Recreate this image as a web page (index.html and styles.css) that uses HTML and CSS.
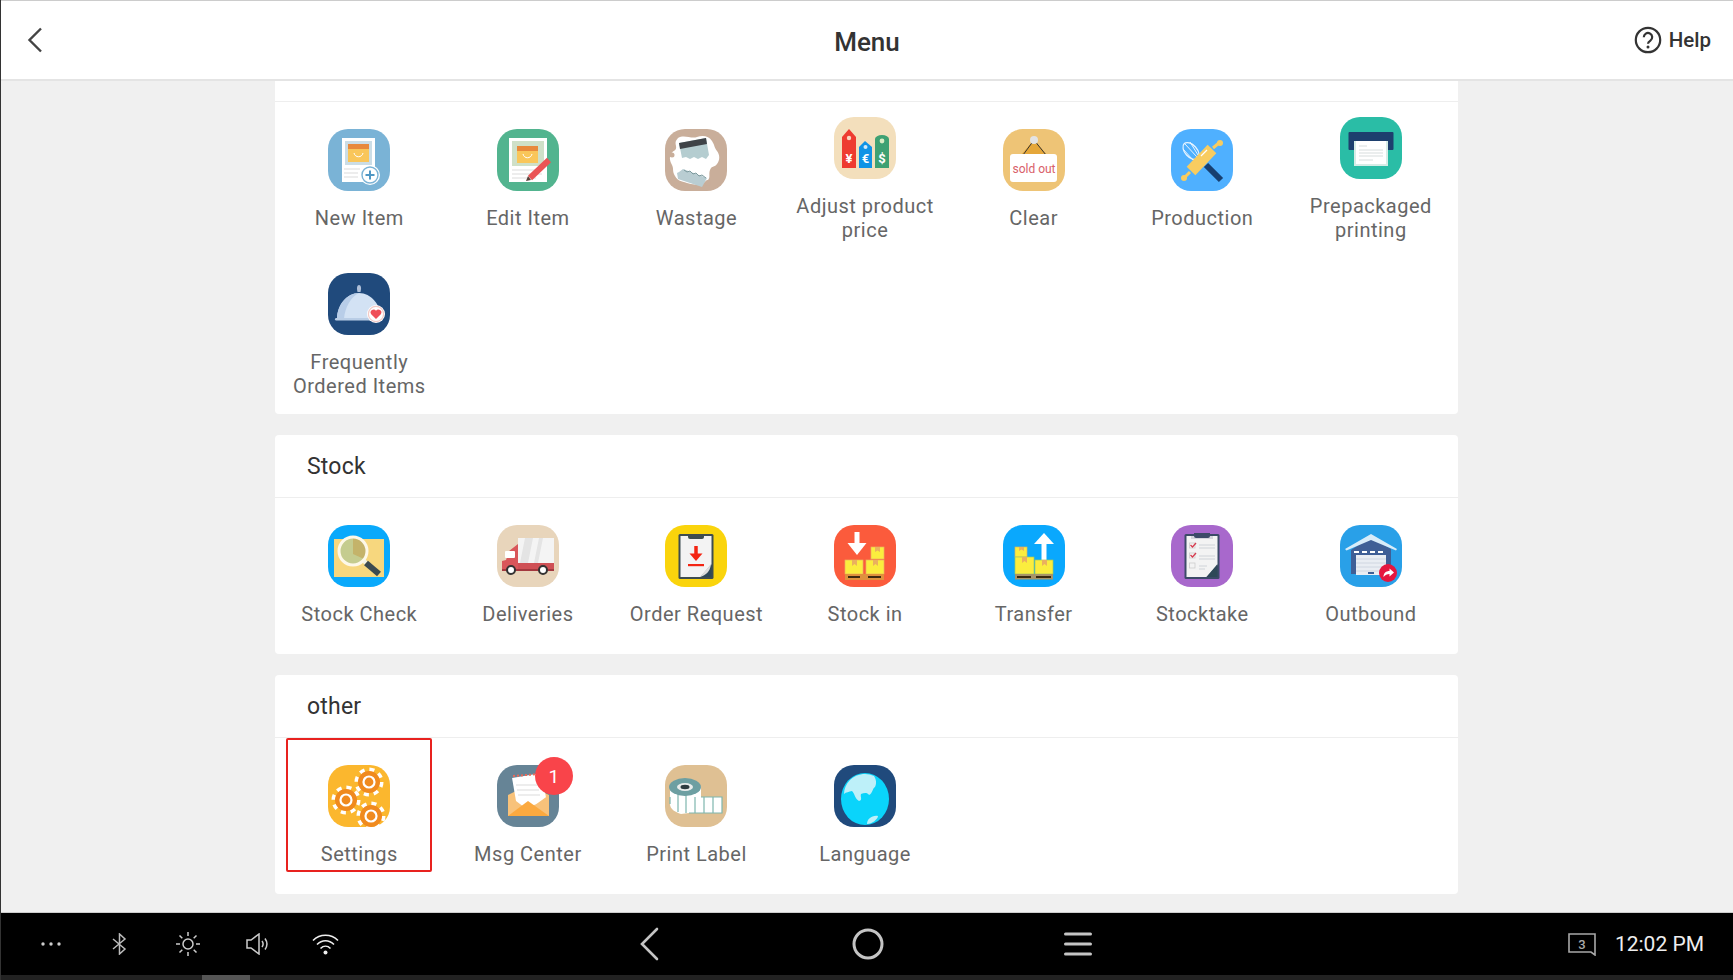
FILE: index.html
```html
<!DOCTYPE html>
<html lang="en">
<head>
<meta charset="utf-8">
<title>Menu</title>
<link rel="stylesheet" href="styles.css">
</head>
<body>
<div class="screen">
  <header class="topbar">
    <button class="back" aria-label="Back">
      <svg width="16" height="26" viewBox="0 0 16 26"><path d="M14 1.5 2.5 13 14 24.5" fill="none" stroke="#444" stroke-width="2.4"/></svg>
    </button>
    <h1 class="title">Menu</h1>
    <div class="help">
      <svg width="28" height="28" viewBox="0 0 28 28"><circle cx="14" cy="14" r="12.2" fill="none" stroke="#333" stroke-width="2.2"/><path d="M9.8 11.2a4.2 4.2 0 1 1 6.6 3.4c-1.5 1-2.4 1.6-2.4 3.2" fill="none" stroke="#333" stroke-width="2.2"/><circle cx="14" cy="21" r="1.5" fill="#333"/></svg>
      <span>Help</span>
    </div>
  </header>

  <main class="content">
    <div class="panel">
      <section class="card">
        <div class="card-head card-head-clipped"></div>
        <div class="grid">
          <div class="item">
            <svg class="icon" viewBox="0 0 62 62"><rect width="62" height="62" rx="20" fill="#7ab3d6"/><rect x="14" y="9" width="33" height="44" fill="#fff"/><rect x="17" y="12" width="27" height="24" fill="#cbdde6"/><rect x="20" y="15" width="21" height="18" fill="#f9c65a"/><path d="M20 15h21v5H20z" fill="#e8893c"/><path d="M26 24c1 5 8 5 9 0" fill="none" stroke="#fff" stroke-width="1"/><path d="M16 40h16M16 44h14M16 48h14" stroke="#dcdcdc" stroke-width="1.2"/><circle cx="42" cy="46" r="10" fill="#fff"/><circle cx="42" cy="46" r="8" fill="none" stroke="#7ab3d6" stroke-width="1.4"/><path d="M42 41.5v9M37.5 46h9" stroke="#4f97c4" stroke-width="2"/></svg>
            <span class="label">New Item</span>
          </div>
          <div class="item">
            <svg class="icon" viewBox="0 0 62 62"><rect width="62" height="62" rx="20" fill="#52b48f"/><rect x="12" y="9" width="38" height="44" fill="#fff"/><rect x="15" y="12" width="32" height="25" fill="#cfe0c8"/><rect x="20" y="17" width="21" height="17" fill="#f9c65a"/><path d="M20 17h21v5H20z" fill="#e8893c"/><path d="M26 25c1 5 8 5 9 0" fill="none" stroke="#fff" stroke-width="1"/><path d="M15 41h30M15 45h30M15 49h24" stroke="#dcdcdc" stroke-width="1.2"/><path d="M52 31 33 49" stroke="#ea5455" stroke-width="6"/><path d="M31 47l3 4-5 1z" fill="#59413a"/></svg>
            <span class="label">Edit Item</span>
          </div>
          <div class="item">
            <svg class="icon" viewBox="0 0 62 62"><rect width="62" height="62" rx="20" fill="#c9ae9a"/><path d="M13 9c6-4 13 1 19-1s12-1 15 4 2 6 5 10 3 9 0 13-5 1-7 6 2 9-5 12-12 3-18 1-9-2-12-7-1-7-3-11-3-7-1-11 6-3 5-8 0-5 2-8z" fill="#fff"/><circle cx="7" cy="26" r="2.500" fill="#c9ae9a"/><circle cx="43" cy="54" r="3" fill="#c9ae9a"/><path d="M14 14 41 9l3 17-3 4-4-2-4 2-4-2-4 2-4-2-4 1z" fill="#b5cdd0"/><path d="M14 14 41 9l1 6-27 5z" fill="#3f4347"/><path d="M18 40l24 9-5 9-24-8-1-6 2-1z" fill="#b9cdd2"/><path d="M19 41l3 2 3-1 3 3 3-1 3 3 3-1 4 3" fill="none" stroke="#7d9a9e" stroke-width="1"/></svg>
            <span class="label">Wastage</span>
          </div>
          <div class="item">
            <svg class="icon" viewBox="0 0 62 62"><rect width="62" height="62" rx="20" fill="#f3dfbc"/><path d="M8 20l7-8 7 8v31H8z" fill="#ee3b30"/><circle cx="15" cy="21" r="2.2" fill="#f9d5c0"/><text x="15" y="46" class="tag-text">¥</text><path d="M25 30l6-6 7 6v21H25z" fill="#0f93e6"/><circle cx="31.500" cy="30" r="2" fill="#cfe9fa"/><text x="31.500" y="46" class="tag-text">€</text><path d="M41 22a7 4 0 0 1 14 0v29H41z" fill="#3ea173"/><circle cx="48" cy="24" r="2.400" fill="#d9ecc4"/><text x="48" y="46" class="tag-text">$</text></svg>
            <span class="label">Adjust product price</span>
          </div>
          <div class="item">
            <svg class="icon" viewBox="0 0 62 62"><rect width="62" height="62" rx="20" fill="#eec476"/><path d="M31 11 17 27h28z" fill="#e5a73a"/><path d="M31 11 20 26M31 11 43 26" stroke="#333" stroke-width="1"/><circle cx="31" cy="11" r="4" fill="#e3e3e3"/><rect x="7" y="25" width="47" height="28" rx="3" fill="#fff"/><text x="31" y="44" class="sold-text">sold out</text></svg>
            <span class="label">Clear</span>
          </div>
          <div class="item">
            <svg class="icon" viewBox="0 0 62 62"><rect width="62" height="62" rx="20" fill="#4fb0ff"/><ellipse cx="20" cy="22" rx="6" ry="10" transform="rotate(-42 20 22)" fill="none" stroke="#e9f5ff" stroke-width="1.2"/><path d="M14 15l12 13M19 13l8 13M12 20l10 11" stroke="#e9f5ff" stroke-width="1"/><path d="M35 36l15 15" stroke="#173f70" stroke-width="6"/><path d="M20 42 41 20" stroke="#f8cc60" stroke-width="12"/><path d="M42 19l7-6M19 43l-6 6" stroke="#f8cc60" stroke-width="3"/><circle cx="49" cy="14" r="3" fill="#f8cc60"/><circle cx="13" cy="49" r="3" fill="#f8cc60"/><path d="M30 27l6-6" stroke="#fff" stroke-width="1.200"/></svg>
            <span class="label">Production</span>
          </div>
          <div class="item">
            <svg class="icon" viewBox="0 0 62 62"><rect width="62" height="62" rx="20" fill="#2abda6"/><rect x="8.500" y="15" width="45" height="18" rx="1" fill="#1d3f6e"/><rect x="14" y="24" width="34" height="25" fill="#d6ece6"/><rect x="16" y="24" width="30" height="23" fill="#fff"/><path d="M19 29h8M19 33h24M19 36h24M19 39h24M19 43h14" stroke="#d8dddd" stroke-width="1.200"/></svg>
            <span class="label">Prepackaged printing</span>
          </div>
          <div class="item">
            <svg class="icon" viewBox="0 0 62 62"><rect width="62" height="62" rx="20" fill="#204a7c"/><path d="M31 12c2 0 2.600 3 1.500 7h-3c-1-4-.5-7 1.500-7z" fill="#aebfd8"/><path d="M9 46c0-14 10-26 22-26s22 12 22 26z" fill="#d3e2f4"/><path d="M9 46c0-14 10-26 22-26-8 4-14 14-15 26z" fill="#b8cde8"/><rect x="7" y="45" width="45" height="2.500" rx="1.200" fill="#b9cde6"/><circle cx="48" cy="41" r="9" fill="#fff"/><circle cx="48" cy="41" r="7.600" fill="none" stroke="#f3c9c6" stroke-width="1.200"/><path d="M48 46l-4.800-4.800a2.900 2.900 0 0 1 4.800-3.400 2.900 2.900 0 0 1 4.800 3.400z" fill="#ef4f58"/></svg>
            <span class="label">Frequently Ordered Items</span>
          </div>
        </div>
      </section>

      <section class="card">
        <div class="card-head"><h2 class="card-title">Stock</h2></div>
        <div class="grid">
          <div class="item">
            <svg class="icon" viewBox="0 0 62 62"><rect width="62" height="62" rx="20" fill="#0aa9fb"/><rect x="6" y="14" width="50" height="38" fill="#f7d77e"/><circle cx="25" cy="26" r="14" fill="#c5cc8f"/><path d="M25 12a14 14 0 0 1 14 14c0 3-1 6-3 8l-11-5z" fill="#c4b36a"/><circle cx="25" cy="26" r="14" fill="none" stroke="#fdf8e8" stroke-width="3"/><path d="M36 36l2 2" stroke="#f3f3e6" stroke-width="4"/><path d="M38 38l13 11" stroke="#3c4a50" stroke-width="6"/></svg>
            <span class="label">Stock Check</span>
          </div>
          <div class="item">
            <svg class="icon" viewBox="0 0 62 62"><rect width="62" height="62" rx="20" fill="#e8d5bb"/><rect x="21" y="13" width="36" height="25" fill="#f4f4f4"/><path d="M28 13h8l-5 25h-8zM42 13h4l-5 25h-4z" fill="#e4e4e4"/><path d="M21 19v25H5v-8l4-1 3-9z" fill="#d9565a"/><rect x="8" y="26" width="10" height="7" rx="1" fill="#fff"/><rect x="21" y="38" width="36" height="6" fill="#cf5055"/><rect x="5" y="44" width="52" height="2" fill="#a3383e"/><circle cx="14" cy="45" r="4" fill="#fff" stroke="#333" stroke-width="2"/><circle cx="46" cy="45" r="4" fill="#fff" stroke="#333" stroke-width="2"/></svg>
            <span class="label">Deliveries</span>
          </div>
          <div class="item">
            <svg class="icon" viewBox="0 0 62 62"><rect width="62" height="62" rx="20" fill="#fad40c"/><rect x="13.500" y="9" width="35" height="45" rx="1.500" fill="#3d4c50"/><path d="M15.500 11h31v29l-11 12h-20z" fill="#f3f3f3"/><path d="M46.500 39v13h-11z" fill="#2f4858"/><path d="M35 52l11-13c-1 8-5 11-11 13z" fill="#ddd"/><path d="M23 10h16v2a2 2 0 0 1-2 2H25a2 2 0 0 1-2-2z" fill="#3d4c50"/><path d="M31 21v11" stroke="#f32412" stroke-width="3.500"/><path d="M24.500 28.500h13L31 36z" fill="#f32412"/><rect x="23" y="39" width="16" height="2.200" fill="#f32412"/></svg>
            <span class="label">Order Request</span>
          </div>
          <div class="item">
            <svg class="icon" viewBox="0 0 62 62"><rect width="62" height="62" rx="20" fill="#fb5b3c"/><path d="M23 7v13" stroke="#fff" stroke-width="5"/><path d="M13.500 18h19L23 30z" fill="#fff"/><rect x="37" y="22" width="13" height="12" fill="#fbed3e" stroke="#eab15e" stroke-width=".7"/><rect x="11" y="35" width="18" height="14" fill="#fbed3e" stroke="#eab15e" stroke-width=".7"/><rect x="32" y="35" width="18" height="14" fill="#fbed3e" stroke="#eab15e" stroke-width=".7"/><path d="M18 35h5v6l-2.500-2-2.500 2zM39 35h5v6l-2.500-2-2.500 2zM41 22h5v5l-2.500-1.500L41 27z" fill="#eab15e"/><rect x="11" y="49" width="39" height="6" fill="#e0913d"/><path d="M14 52h12M34 52h13" stroke="#3f2a10" stroke-width="1.800"/></svg>
            <span class="label">Stock in</span>
          </div>
          <div class="item">
            <svg class="icon" viewBox="0 0 62 62"><rect width="62" height="62" rx="20" fill="#0aa8fd"/><path d="M41 18v20" stroke="#fff" stroke-width="5"/><path d="M31 19l10-11 10 11z" fill="#fff"/><rect x="12" y="22" width="12" height="10" fill="#fbed3e" stroke="#d9b45e" stroke-width=".7"/><rect x="12" y="32" width="19" height="17" fill="#fbed3e" stroke="#9ec85e" stroke-width=".7"/><rect x="32" y="35" width="18" height="14" fill="#fbed3e" stroke="#9ec85e" stroke-width=".7"/><path d="M16 22h5v4l-2.500-1.500L16 26zM19 32h5v6l-2.500-2-2.500 2zM39 35h5v6l-2.500-2-2.500 2z" fill="#eab15e"/><rect x="12" y="49" width="38" height="5.500" fill="#a89468"/><path d="M14 52h14M33 52h15" stroke="#3a2a10" stroke-width="1.800"/></svg>
            <span class="label">Transfer</span>
          </div>
          <div class="item">
            <svg class="icon" viewBox="0 0 62 62"><rect width="62" height="62" rx="20" fill="#a868cc"/><rect x="13.500" y="9" width="35" height="45" rx="1.500" fill="#3c4a68"/><path d="M15.500 11h31v29l-11 12h-20z" fill="#f3f3f3"/><path d="M46.500 39v13h-11z" fill="#2f4858"/><path d="M20 11h22v3H20z" fill="#d5d5dc"/><path d="M23 8h16v3a2 2 0 0 1-2 2H25a2 2 0 0 1-2-2z" fill="#3c4a68"/><rect x="18.500" y="18" width="5.500" height="5" fill="none" stroke="#ccc" stroke-width=".8"/><path d="M19.500 20l2 2 3.500-4" fill="none" stroke="#d63c4f" stroke-width="1.300"/><rect x="18.500" y="28" width="5.500" height="5" fill="none" stroke="#ccc" stroke-width=".8"/><path d="M19.500 30l2 2 3.500-4" fill="none" stroke="#d63c4f" stroke-width="1.300"/><rect x="18.500" y="38" width="5.500" height="5" fill="none" stroke="#ccc" stroke-width=".8"/><path d="M28 20h16M28 23h16M28 31h16M28 34h16M28 41h8M28 44h6" stroke="#cfd3d8" stroke-width="1"/></svg>
            <span class="label">Stocktake</span>
          </div>
          <div class="item">
            <svg class="icon" viewBox="0 0 62 62"><rect width="62" height="62" rx="20" fill="#29a0e8"/><path d="M11 25 31 12l20 12v25H11z" fill="#3f5f96"/><path d="M5 24 31 9l26 15-1 1.500L31 15 6.500 25.500z" fill="#d8ecf9"/><path d="M14 27h5M22 27h5M30 27h5M38 27h5" stroke="#fff" stroke-width="2"/><rect x="16" y="30" width="30" height="20" fill="#e9edf3"/><path d="M16 34h30M16 38h30M16 42h30M16 46h30" stroke="#c8d0dc" stroke-width=".8"/><rect x="28" y="47" width="6" height="2" fill="#3f5f96"/><circle cx="48" cy="48" r="9" fill="#e5173f"/><path d="M43.500 52c0-4 2.500-6 6-6v-2.500l4.500 4-4.500 4V49c-2.500 0-4.500 1-6 3z" fill="#fff"/></svg>
            <span class="label">Outbound</span>
          </div>
        </div>
      </section>

      <section class="card">
        <div class="card-head"><h2 class="card-title">other</h2></div>
        <div class="grid">
          <div class="item item-selected">
            <svg class="icon" viewBox="0 0 62 62"><defs><g id="gear"><circle r="12.500" fill="none" stroke="#fff" stroke-width="4" stroke-dasharray="5 4.820"/><circle r="11" fill="#f08a1e"/><circle r="5.500" fill="#f08a1e" stroke="#fff" stroke-width="2.200"/></g></defs><rect width="62" height="62" rx="20" fill="#fbb72e"/><use href="#gear" x="41" y="17"/><use href="#gear" x="18" y="35"/><use href="#gear" x="43" y="51"/></svg>
            <span class="label">Settings</span>
          </div>
          <div class="item">
            <div class="icon-wrap">
              <svg class="icon" viewBox="0 0 62 62"><rect width="62" height="62" rx="20" fill="#668496"/><path d="M11 30 31 20l21 10v21H11z" fill="#f8c27a"/><path d="M16 12l30-3 3 30-30 3z" fill="#fff" transform="rotate(-4 31 26)"/><path d="M16 11l27-2" stroke="#e76a5a" stroke-width="2" stroke-dasharray="2 2"/><path d="M19 20h22M20 25h22M21 30h22" stroke="#dcdcdc" stroke-width="1.200"/><path d="M11 30l20 15 21-15v21H11z" fill="#f8c27a"/><path d="M11 51l20-15 21 15z" fill="#fba93f"/></svg>
              <span class="badge">1</span>
            </div>
            <span class="label">Msg Center</span>
          </div>
          <div class="item">
            <svg class="icon" viewBox="0 0 62 62"><rect width="62" height="62" rx="20" fill="#dfc093"/><path d="M5 21v18c0 5 5 8 11 10l8-1h33V32H36V21z" fill="#fff"/><path d="M13 24v23M21 28v20M30 32v16M39 32v16M48 32v16M5 32v7M36 32h21v16H24" fill="none" stroke="#7eb6ae" stroke-width="1.200"/><ellipse cx="20" cy="22" rx="16" ry="9" fill="#6d9fa2"/><ellipse cx="20" cy="22" rx="8" ry="4" fill="#e9edec"/><ellipse cx="20" cy="22" rx="4.500" ry="2.200" fill="#2d3b40"/></svg>
            <span class="label">Print Label</span>
          </div>
          <div class="item">
            <svg class="icon" viewBox="0 0 62 62"><rect width="62" height="62" rx="20" fill="#204a7c"/><ellipse cx="31" cy="34" rx="24" ry="26" fill="#0ad4fb"/><path d="M16 15c6-6 16-8 24-4 2 3 3 7 1 11-3 2-2 6-6 8-2-3-5-2-8-1-1 3 2 6-2 7-4-2-4-7-7-10-3 1-6 1-8 3 0-5 2-10 6-14z" fill="#bdf0f9"/><path d="M33 59c0-5 5-9 11-8 0 3-6 8-11 8z" fill="#bdf0f9"/></svg>
            <span class="label">Language</span>
          </div>
        </div>
      </section>
    </div>
  </main>

  <footer class="sysbar">
    <div class="sys-main">
      <div class="sys-left">
        <span class="slot"><svg width="22" height="6" viewBox="0 0 22 6"><g fill="#ccc"><circle cx="3" cy="3" r="1.700"/><circle cx="11" cy="3" r="1.700"/><circle cx="19" cy="3" r="1.700"/></g></svg></span>
        <span class="slot"><svg width="15" height="22" viewBox="0 0 15 22"><path d="M1 6l12 10-5.500 5V1L13 6 1 16" fill="none" stroke="#bbb" stroke-width="1.500"/></svg></span>
        <span class="slot"><svg width="24" height="24" viewBox="0 0 24 24"><circle cx="12" cy="12" r="5" fill="none" stroke="#ccc" stroke-width="1.500"/><path d="M12 0v4M12 20v4M0 12h4M20 12h4M3.500 3.500l2.800 2.800M17.700 17.700l2.800 2.800M3.500 20.500l2.800-2.800M17.700 6.300l2.800-2.800" stroke="#ccc" stroke-width="1.500"/></svg></span>
        <span class="slot"><svg width="22" height="22" viewBox="0 0 22 22"><path d="M1 7h4l8-6v20l-8-6H1z" fill="none" stroke="#ccc" stroke-width="1.500"/><path d="M16 8c1.500 2 1.500 4 0 6M19 5.500c2.500 3.500 2.500 7.500 0 11" fill="none" stroke="#ccc" stroke-width="1.500"/></svg></span>
        <span class="slot"><svg width="27" height="21" viewBox="0 0 27 21"><path d="M1 6.500c7-7 18-7 25 0M5 10.500c5-5 12-5 17 0M8.500 14.500c3-3 7-3 10 0" fill="none" stroke="#eee" stroke-width="1.600"/><circle cx="13.500" cy="18.500" r="2" fill="#eee"/></svg></span>
      </div>
      <div class="sys-nav">
        <svg width="20" height="34" viewBox="0 0 20 34"><path d="M18 2 3 17l15 15" fill="none" stroke="#c4c4c4" stroke-width="2.600" stroke-linecap="round"/></svg>
        <svg class="nav-home" width="32" height="32" viewBox="0 0 32 32"><circle cx="16" cy="16" r="14" fill="none" stroke="#c4c4c4" stroke-width="3"/></svg>
        <svg width="28" height="26" viewBox="0 0 28 26"><path d="M1.500 3h25M1.500 13h25M1.500 23h25" stroke="#c4c4c4" stroke-width="3" stroke-linecap="round"/></svg>
      </div>
      <div class="sys-right">
        <div class="screens">
          <svg width="28" height="23" viewBox="0 0 28 23"><path d="M1 1h26v21l-4-3H1z" fill="none" stroke="#a8a8a8" stroke-width="1.600"/></svg>
          <span class="screens-num">3</span>
        </div>
        <span class="clock">12:02 PM</span>
      </div>
    </div>
    <div class="sys-strip"><span class="sys-thumb"></span></div>
  </footer>
</div>
</body>
</html>
```
FILE: styles.css
```css
*, *::after { box-sizing: border-box; }
html, body { margin: 0; padding: 0; height: 100%; }
body { font-family: Roboto, "Liberation Sans", sans-serif; background: #f0f0f0; overflow: hidden; }

.screen { width: 1733px; height: 980px; display: flex; flex-direction: column; border-left: 1px solid #333; }

.topbar {
  height: 81px; flex: none; display: grid; grid-template-columns: 1fr auto 1fr; align-items: center;
  background: #fff; border-top: 1px solid #ccc; border-bottom: 2px solid #e4e4e4;
  padding: 0 22px;
}
.back { padding: 0; margin: 0 0 0 4px; border: 0; background: none; justify-self: start; display: flex; }
.title { margin: 3px 0 0; font-size: 26px; font-weight: 500; color: #333; }
.help { justify-self: end; display: flex; align-items: center; gap: 7px; font-size: 20.5px; font-weight: 500; color: #333; }

.content { flex: 1; min-height: 0; overflow: hidden; }
.panel { width: 1183px; margin: 0 0 0 274px; display: flex; flex-direction: column; gap: 21px; }

.card { background: #fff; border-radius: 4px; }
.card:first-child { border-radius: 0 0 4px 4px; }
.card-head { height: 63px; padding: 0 32px 0; display: flex; align-items: center; border-bottom: 1px solid #eee; }
.card-head-clipped { height: 21px; }
.card-title { margin: 1px 0 0; font-size: 23px; font-weight: 400; letter-spacing: .2px; color: #333; }

.grid { display: grid; grid-template-columns: repeat(7, 168.6px); grid-auto-rows: 156px; }
.item { position: relative; display: flex; flex-direction: column; align-items: center; justify-content: center; gap: 14.5px; padding: 0 8px 1px; text-align: center; }
.item-selected::after { content: ""; position: absolute; left: 11px; top: 0; width: 146px; height: 134px; border: 2.5px solid #e8221f; border-radius: 2px; }
.icon { display: block; width: 62px; height: 62px; flex: none; }
.icon-wrap { position: relative; width: 62px; height: 62px; }
.label { font-size: 20px; line-height: 24px; letter-spacing: .5px; color: #666; }
.badge {
  position: absolute; left: 38px; top: -8px; width: 38px; height: 38px; border-radius: 50%;
  display: flex; align-items: center; justify-content: center;
  background: #f9444a; color: #fff; font-size: 19px;
}
.tag-text { font: 700 13px Roboto, sans-serif; fill: #fff; text-anchor: middle; }
.sold-text { font: 400 12px Roboto, sans-serif; fill: #d9606a; text-anchor: middle; }

.sysbar { height: 68px; flex: none; display: flex; flex-direction: column; background: #000; border-top: 1px solid #ccc; }
.sys-main { flex: 1; display: grid; grid-template-columns: 1fr auto 1fr; align-items: center; padding: 0 29px 0 16px; }
.sys-left { justify-self: start; display: flex; align-items: center; }
.slot { flex: 0 0 68.5px; display: flex; align-items: center; justify-content: center; }
.sys-nav { display: flex; align-items: center; margin-left: 10px; }
.nav-home { margin: 0 180px 0 193px; }
.sys-right { justify-self: end; display: flex; align-items: center; gap: 19px; }
.screens { position: relative; display: flex; }
.screens-num { position: absolute; left: 0; right: 0; top: 4px; text-align: center; font-size: 13px; font-weight: 500; color: #aaa; }
.clock { font-size: 21px; color: #eee; }
.sys-strip { height: 5px; flex: none; background: #222; }
.sys-thumb { display: block; width: 48px; height: 5px; margin-left: 201px; background: #555; }
```
